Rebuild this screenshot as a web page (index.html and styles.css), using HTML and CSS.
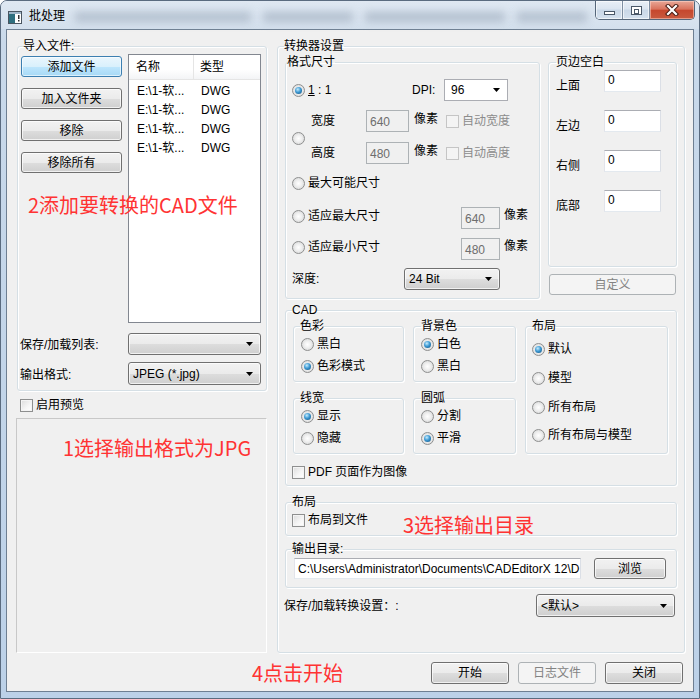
FILE: index.html
```html
<!DOCTYPE html>
<html lang="zh-CN">
<head>
<meta charset="utf-8">
<title>批处理</title>
<link rel="stylesheet" href="styles.css">
</head>
<body>
<div class="window">
  <div class="titlebar">
    <svg class="app-icon" width="14" height="13" viewBox="0 0 14 13">
      <rect x="0.5" y="0.5" width="13" height="12" fill="#ffffff" stroke="#4a5560"/>
      <rect x="1" y="3" width="6" height="9" fill="#2f6f7f"/>
      <rect x="1" y="1" width="12" height="2" fill="#9fb6c8"/>
      <rect x="10" y="4" width="1.5" height="4" fill="#333"/>
      <rect x="10" y="9" width="1.5" height="1.5" fill="#333"/>
    </svg>
    <span class="title">批处理</span>
    <div class="ghost">
      <span class="g g1"></span><span class="g g2"></span><span class="g g3"></span><span class="g g4"></span>
    </div>
    <div class="caption-buttons">
      <div class="cb cb-min"><span class="min-glyph"></span></div>
      <div class="cb cb-max"><span class="max-glyph"></span></div>
      <div class="cb cb-close">
        <svg width="14" height="12" viewBox="0 0 14 12"><path d="M3 2 L11 10 M11 2 L3 10" stroke="#4a1d14" stroke-width="4.2" stroke-linecap="square"/><path d="M3 2 L11 10 M11 2 L3 10" stroke="#ffffff" stroke-width="2.2" stroke-linecap="square"/></svg>
      </div>
    </div>
  </div>

  <div class="client">
    <div class="main">
      <div class="left-col">
        <fieldset class="group import">
          <legend>导入文件:</legend>
          <div class="import-top">
            <div class="btn-col">
              <div class="btn default">添加文件</div>
              <div class="btn">加入文件夹</div>
              <div class="btn">移除</div>
              <div class="btn">移除所有</div>
            </div>
            <div class="listview">
              <div class="lv-header">
                <div class="lv-col c1">名称</div>
                <div class="lv-col c2">类型</div>
              </div>
              <div class="lv-row"><span class="c1">E:\1-软...</span><span class="c2">DWG</span></div>
              <div class="lv-row"><span class="c1">E:\1-软...</span><span class="c2">DWG</span></div>
              <div class="lv-row"><span class="c1">E:\1-软...</span><span class="c2">DWG</span></div>
              <div class="lv-row"><span class="c1">E:\1-软...</span><span class="c2">DWG</span></div>
            </div>
          </div>
          <div class="form-row fr1">
            <span class="form-label">保存/加载列表:</span>
            <div class="combo w133"><span class="combo-text"></span><svg class="arrow" width="8" height="4" viewBox="0 0 8 4"><path d="M0 0h7l-3.5 4z"/></svg></div>
          </div>
          <div class="form-row fr2">
            <span class="form-label">输出格式:</span>
            <div class="combo w133 h23"><span class="combo-text">JPEG (*.jpg)</span><svg class="arrow" width="8" height="4" viewBox="0 0 8 4"><path d="M0 0h7l-3.5 4z"/></svg></div>
          </div>
        </fieldset>
        <label class="check-row preview-check"><span class="cbx"></span>启用预览</label>
        <div class="preview">
          <span class="note">1选择输出格式为JPG</span>
        </div>
        <span class="note note-2">2添加要转换的CAD文件</span>
      </div>

      <fieldset class="group conv">
        <legend>转换器设置</legend>
        <div class="conv-top">
          <fieldset class="group size">
            <legend>格式尺寸</legend>
            <div class="size-r1">
              <label class="radio checked w120"><span class="rb"></span><span><u>1</u> : 1</span></label>
              <span class="dpi-label">DPI:</span>
              <div class="combo white w64"><span class="combo-text">96</span><svg class="arrow" width="8" height="4" viewBox="0 0 8 4"><path d="M0 0h7l-3.5 4z"/></svg></div>
            </div>
            <div class="size-wh">
              <span class="rb"></span>
              <div class="wh-rows">
                <div class="wh-row">
                  <span class="wh-label">宽度</span>
                  <div class="input disabled w43">640</div>
                  <span class="px">像素</span>
                  <span class="cbx disabled"></span>
                  <span class="gray">自动宽度</span>
                </div>
                <div class="wh-row">
                  <span class="wh-label">高度</span>
                  <div class="input disabled w43">480</div>
                  <span class="px">像素</span>
                  <span class="cbx disabled"></span>
                  <span class="gray">自动高度</span>
                </div>
              </div>
            </div>
            <label class="radio size-max"><span class="rb"></span>最大可能尺寸</label>
            <div class="fit-row fit1">
              <label class="radio w169"><span class="rb"></span>适应最大尺寸</label>
              <div class="input disabled w39">640</div>
              <span class="px2">像素</span>
            </div>
            <div class="fit-row fit2">
              <label class="radio w169"><span class="rb"></span>适应最小尺寸</label>
              <div class="input disabled w39">480</div>
              <span class="px2">像素</span>
            </div>
            <div class="depth-row">
              <span class="depth-label">深度:</span>
              <div class="combo w96"><span class="combo-text">24 Bit</span><svg class="arrow" width="8" height="4" viewBox="0 0 8 4"><path d="M0 0h7l-3.5 4z"/></svg></div>
            </div>
          </fieldset>

          <div class="margin-col">
            <fieldset class="group margins">
              <legend>页边空白</legend>
              <div class="m-row"><span class="m-label">上面</span><div class="input white w57">0</div></div>
              <div class="m-row"><span class="m-label">左边</span><div class="input white w57">0</div></div>
              <div class="m-row"><span class="m-label">右侧</span><div class="input white w57">0</div></div>
              <div class="m-row"><span class="m-label">底部</span><div class="input white w57">0</div></div>
            </fieldset>
            <div class="btn disabled custom">自定义</div>
          </div>
        </div>

        <fieldset class="group cad">
          <legend>CAD</legend>
          <div class="cad-grid">
            <fieldset class="group sub color">
              <legend>色彩</legend>
              <label class="radio r-first"><span class="rb"></span>黑白</label>
              <label class="radio checked r-next"><span class="rb"></span>色彩模式</label>
            </fieldset>
            <fieldset class="group sub bg">
              <legend>背景色</legend>
              <label class="radio checked r-first"><span class="rb"></span>白色</label>
              <label class="radio r-next"><span class="rb"></span>黑白</label>
            </fieldset>
            <fieldset class="group sub layout">
              <legend>布局</legend>
              <label class="radio checked l1"><span class="rb"></span>默认</label>
              <label class="radio l2"><span class="rb"></span>模型</label>
              <label class="radio l2"><span class="rb"></span>所有布局</label>
              <label class="radio l3"><span class="rb"></span>所有布局与模型</label>
            </fieldset>
            <fieldset class="group sub lw">
              <legend>线宽</legend>
              <label class="radio checked r-first"><span class="rb"></span>显示</label>
              <label class="radio r-next"><span class="rb"></span>隐藏</label>
            </fieldset>
            <fieldset class="group sub arc">
              <legend>圆弧</legend>
              <label class="radio r-first"><span class="rb"></span>分割</label>
              <label class="radio checked r-next"><span class="rb"></span>平滑</label>
            </fieldset>
          </div>
          <label class="check-row pdf-row"><span class="cbx"></span>PDF 页面作为图像</label>
        </fieldset>

        <fieldset class="group layout-file">
          <legend>布局</legend>
          <label class="check-row lf-row"><span class="cbx"></span>布局到文件</label>
          <span class="note note-3">3选择输出目录</span>
        </fieldset>

        <fieldset class="group outdir">
          <legend>输出目录:</legend>
          <div class="outdir-row">
            <div class="input white path">C:\Users\Administrator\Documents\CADEditorX 12\D</div>
            <div class="btn browse">浏览</div>
          </div>
        </fieldset>

        <div class="save-row">
          <span>保存/加载转换设置：:</span>
          <div class="combo w139 h23"><span class="combo-text">&lt;默认&gt;</span><svg class="arrow" width="8" height="4" viewBox="0 0 8 4"><path d="M0 0h7l-3.5 4z"/></svg></div>
        </div>
      </fieldset>
    </div>

    <div class="footer">
      <span class="note note-4">4点击开始</span>
      <div class="footer-btns">
        <div class="btn fbtn">开始</div>
        <div class="btn fbtn disabled">日志文件</div>
        <div class="btn fbtn">关闭</div>
      </div>
    </div>
  </div>
</div>
</body>
</html>
```

FILE: styles.css
```css
* { box-sizing: border-box; }

html, body {
  margin: 0;
  padding: 0;
  background: #ffffff;
}

body {
  font-family: "Liberation Sans", "Noto Sans CJK SC", sans-serif;
  font-size: 12px;
  line-height: 16px;
  color: #000;
}

/* group boxes (base, low specificity so per-group rules win) */
.group {
  margin: 0;
  padding: 0;
  min-width: 0;
  border: 1px solid #d5dfe5;
  border-radius: 3px;
  box-shadow: inset 1px 1px 0 #ffffff, 1px 1px 0 #ffffff;
}

.group > legend {
  padding: 0;
  margin-left: 0;
  line-height: 16px;
  height: 16px;
  font-size: 12px;
}

.window {
  width: 700px;
  height: 699px;
  border: 1px solid #5a6b7f;
  border-radius: 7px 7px 0 0;
  background: linear-gradient(to bottom, #d3e0ee 0%, #c9d9ea 6%, #bcd1e8 100%);
  padding: 0 5px 6px 5px;
  display: flex;
  flex-direction: column;
  overflow: hidden;
}

/* ---------- title bar ---------- */
.titlebar {
  height: 28px;
  display: flex;
  align-items: center;
  flex: none;
  background: linear-gradient(to bottom, #dfe8f2, #d4e0ed);
  margin: 0 -5px;
  padding: 0 5px;
}

.app-icon {
  margin-left: 2px;
  margin-top: 4px;
  flex: none;
}

.title {
  margin-left: 7px;
  margin-top: 2px;
  font-size: 12px;
  color: #000;
}

.ghost {
  flex: 1;
  display: flex;
  align-items: center;
  margin-left: 10px;
  margin-top: 3px;
  height: 18px;
  gap: 12px;
}

.g {
  display: block;
  height: 10px;
  background: #a7b4c4;
  filter: blur(4px);
  opacity: 0.75;
}
.g1 { width: 176px; }
.g2 { width: 90px; }
.g3 { width: 140px; }
.g4 { width: 70px; }

.caption-buttons {
  align-self: flex-start;
  display: flex;
  height: 19px;
  margin-right: -1px;
  border: 1px solid #55667a;
  border-top: none;
  border-radius: 0 0 5px 5px;
  overflow: hidden;
  flex: none;
}

.cb {
  height: 100%;
  display: flex;
  align-items: center;
  justify-content: center;
  background: linear-gradient(to bottom, #e9eff6 0%, #dbe5f0 45%, #c9d7e7 50%, #d5e1ee 100%);
  box-shadow: inset 0 0 0 1px rgba(255,255,255,0.6);
}
.cb-min { width: 27px; border-right: 1px solid #7f8fa2; }
.cb-max { width: 27px; border-right: 1px solid #7f8fa2; }
.cb-close {
  width: 44px;
  background: linear-gradient(to bottom, #e8a797 0%, #d9735d 45%, #c6472e 52%, #c85a3f 100%);
  box-shadow: inset 0 0 0 1px rgba(255,220,210,0.5);
}

.min-glyph {
  width: 11px;
  height: 4px;
  margin-top: 6px;
  background: #fff;
  border: 1px solid #4a5868;
}

.max-glyph {
  width: 11px;
  height: 9px;
  border: 1px solid #4a5868;
  background: #fff;
}
.max-glyph::after {
  content: "";
  display: block;
  margin: 2px 2px 0 2px;
  height: 3px;
  border: 1px solid #4a5868;
}

/* ---------- client ---------- */
.client {
  flex: 1;
  border: 1px solid #6e7f92;
  background: #f0f0f0;
  padding: 8px 8px 0 9px;
  display: flex;
  flex-direction: column;
}

.main {
  display: grid;
  grid-template-columns: 251px 408px;
  column-gap: 10px;
  height: 614px;
}

.left-col {
  display: flex;
  flex-direction: column;
  position: relative;
}

/* ---------- left: import ---------- */
.import {
  margin-left: 1px;
  width: 250px;
  padding: 0 4px 5px 3px;
}
.import > legend { margin-left: 2px; }

.import-top {
  display: flex;
  gap: 6px;
  height: 269px;
}

.btn-col {
  width: 101px;
  padding-top: 2px;
  display: flex;
  flex-direction: column;
  gap: 11px;
}

.btn {
  height: 21px;
  border: 1px solid #707070;
  border-radius: 3px;
  background: linear-gradient(to bottom, #f2f2f2 0%, #ebebeb 50%, #dddddd 51%, #cfcfcf 100%);
  box-shadow: inset 0 0 0 1px rgba(255,255,255,0.7);
  display: flex;
  align-items: center;
  justify-content: center;
  font-size: 12px;
  color: #000;
  flex: none;
}

.btn.default {
  border-color: #3c7fb1;
  background: linear-gradient(to bottom, #eaf6fd 0%, #d9f0fc 50%, #bee6fd 51%, #a7d9f5 100%);
  box-shadow: inset 0 0 0 1px rgba(255,255,255,0.6);
}

.btn.disabled {
  border-color: #adb2b5;
  background: #f4f4f4;
  box-shadow: none;
  color: #838383;
}

.listview {
  width: 133px;
  height: 269px;
  border: 1px solid #828790;
  background: #ffffff;
}

.lv-header {
  height: 25px;
  display: flex;
  background: linear-gradient(to bottom, #ffffff 0%, #ffffff 60%, #f3f4f6 100%);
  border-bottom: 1px solid #e5e5e5;
}

.lv-col {
  display: flex;
  align-items: center;
  padding-left: 7px;
}
.lv-col.c1 { width: 65px; border-right: 1px solid #e5e5e5; }
.lv-col.c2 { flex: 1; padding-left: 6px; }

.lv-row {
  height: 19px;
  display: flex;
  align-items: center;
  padding-left: 8px;
}
.lv-header + .lv-row { margin-top: 1px; }
.lv-row .c1 { width: 64px; }

.form-row {
  display: flex;
  align-items: center;
}
.fr1 { margin-top: 10px; }
.fr2 { margin-top: 7px; }

.form-label {
  width: 107px;
  margin-left: -1px;
  margin-right: 1px;
  margin-top: 2px;
}

.combo {
  height: 22px;
  border: 1px solid #707070;
  border-radius: 3px;
  background: linear-gradient(to bottom, #f2f2f2 0%, #ebebeb 50%, #dddddd 51%, #cfcfcf 100%);
  box-shadow: inset 0 0 0 1px rgba(255,255,255,0.7);
  display: flex;
  align-items: center;
  padding: 0 6px 0 4px;
  flex: none;
}
.combo.white {
  background: #ffffff;
  border-color: #abadb3;
  border-radius: 0;
  box-shadow: none;
  padding-left: 6px;
}
.combo-text { flex: 1; white-space: nowrap; overflow: hidden; }
.arrow { flex: none; fill: #000; }

.w133 { width: 133px; }
.w64 { width: 64px; }
.w96 { width: 96px; }
.w139 { width: 139px; }
.h23 { height: 23px; }

.check-row {
  display: flex;
  align-items: center;
  gap: 3px;
  height: 16px;
}

.cbx {
  width: 13px;
  height: 13px;
  border: 1px solid #8e8f8f;
  background: linear-gradient(135deg, #dcdcdc 0%, #f6f6f6 60%, #ffffff 100%);
  box-shadow: inset 0 0 0 1px #f4f4f4;
  flex: none;
}
.cbx.disabled {
  border-color: #c5c5c5;
  background: #f4f4f4;
  box-shadow: none;
}

.preview-check {
  margin-top: 6px;
  padding-left: 4px;
}

.preview {
  margin-top: 5px;
  height: 235px;
  border: 1px solid;
  border-color: #c8c8c8 #ffffff #ffffff #c8c8c8;
  padding: 16px 0 0 46px;
}

.note {
  color: #ff3333;
  font-family: "Noto Sans CJK SC", "Liberation Sans", sans-serif;
  font-size: 20px;
  line-height: 26px;
  white-space: nowrap;
}

.note-2 {
  position: absolute;
  left: 12px;
  top: 154px;
}

/* ---------- right: converter ---------- */
.conv {
  padding: 0 7px 34px 7px;
}
.conv > legend { margin-left: -1px; }

.conv-top {
  display: flex;
  gap: 8px;
}

.size {
  width: 255px;
  padding: 0 0 8px 6px;
}
.size > legend { margin-left: -5px; }

.radio {
  display: flex;
  align-items: center;
  gap: 3px;
  height: 16px;
  white-space: nowrap;
}

.rb {
  width: 13px;
  height: 13px;
  border-radius: 50%;
  border: 1px solid #8e8f8f;
  background: radial-gradient(circle at 50% 50%, #ffffff 0%, #f0f0f0 40%, #cfd0d0 100%);
  display: flex;
  align-items: center;
  justify-content: center;
  flex: none;
}
.checked .rb::after {
  content: "";
  width: 7px;
  height: 7px;
  border-radius: 50%;
  background: radial-gradient(circle at 40% 35%, #c6ecfc 0%, #3e9ad4 45%, #0c4b78 100%);
}

.w120 { width: 120px; }
.w169 { width: 169px; }

.size-r1 {
  margin-top: 9px;
  display: flex;
  align-items: center;
}
.dpi-label { width: 32px; }

.size-wh {
  margin-top: 9px;
  display: flex;
  align-items: center;
}
.size-wh > .rb { margin-top: 2px; }

.wh-rows {
  margin-left: 6px;
  display: flex;
  flex-direction: column;
  gap: 10px;
}
.wh-row {
  display: flex;
  align-items: center;
  height: 22px;
}
.wh-label { width: 55px; }

.input {
  height: 22px;
  border: 1px solid;
  border-color: #abadb3 #dbdfe6 #e3e9ef #e2e3ea;
  background: #ffffff;
  padding: 1px 0 0 3px;
  white-space: nowrap;
  overflow: hidden;
  flex: none;
}
.input.disabled {
  border-color: #adb2b5;
  background: #f0f0f0;
  color: #6d6d6d;
  padding-top: 3px;
}
.w43 { width: 43px; }
.w39 { width: 39px; }
.w57 { width: 57px; }

.px { margin-left: 5px; margin-top: -4px; }
.wh-row .cbx { margin-left: 8px; }
.gray { color: #8c8c8c; margin-left: 3px; }

.size-max { margin-top: 11px; }

.fit-row {
  display: flex;
  align-items: center;
  height: 22px;
}
.fit1 { margin-top: 16px; }
.fit2 { margin-top: 9px; }
.fit-row .radio { margin-top: -4px; }
.px2 { margin-left: 4px; margin-top: -6px; }

.depth-row {
  margin-top: 8px;
  display: flex;
  align-items: center;
}
.depth-label { width: 112px; }

.margin-col {
  flex: 1;
  display: flex;
  flex-direction: column;
}

.margins {
  padding: 0 0 54px 7px;
}
.m-row {
  display: flex;
  height: 22px;
}
.m-row + .m-row { margin-top: 18px; }
.m-label {
  width: 48px;
  padding-top: 8px;
}

.custom {
  margin: 7px 1px 0 1px;
}

/* CAD */
.cad {
  margin-top: 3px;
  padding: 0 7px 5px 7px;
}
.cad > legend { margin-left: -1px; }

.cad-grid {
  display: grid;
  grid-template-columns: 111px 103px 143px;
  column-gap: 9px;
  row-gap: 8px;
}

.sub { padding: 0 0 7px 7px; }
.color { grid-column: 1; grid-row: 1; }
.bg { grid-column: 2; grid-row: 1; }
.lw { grid-column: 1; grid-row: 2; }
.arc { grid-column: 2; grid-row: 2; }
.layout { grid-column: 3; grid-row: 1 / span 2; padding-left: 6px; }
.color > legend, .lw > legend { margin-left: -1px; }

.r-first { margin-top: 2px; }
.r-next { margin-top: 6px; }
.l1 { margin-top: 7px; }
.l2 { margin-top: 13px; }
.l3 { margin-top: 12px; }

.pdf-row { margin-top: 10px; margin-left: -1px; }

.layout-file {
  margin-top: 8px;
  padding: 0 6px 7px 6px;
  position: relative;
}
.lf-row { margin-top: 2px; }

.note-3 {
  position: absolute;
  left: 117px;
  top: 2px;
}

.outdir {
  margin-top: 5px;
  padding: 0 8px 8px 8px;
}
.outdir > legend { margin-left: -2px; }
.outdir-row {
  margin-top: 1px;
  display: flex;
  align-items: center;
}
.path {
  width: 287px;
  height: 21px;
  padding-top: 2px;
}
.browse {
  margin-left: 13px;
  width: 72px;
}

.save-row {
  margin-top: 6px;
  display: flex;
  align-items: center;
  justify-content: space-between;
  padding-right: 2px;
  margin-left: -1px;
}

/* footer */
.footer {
  margin-top: 10px;
  height: 22px;
  display: flex;
  align-items: center;
  padding-right: 2px;
}
.note-4 { margin-left: 236px; }
.footer-btns {
  margin-left: auto;
  display: flex;
  gap: 9px;
}
.fbtn { width: 78px; height: 22px; }
```
